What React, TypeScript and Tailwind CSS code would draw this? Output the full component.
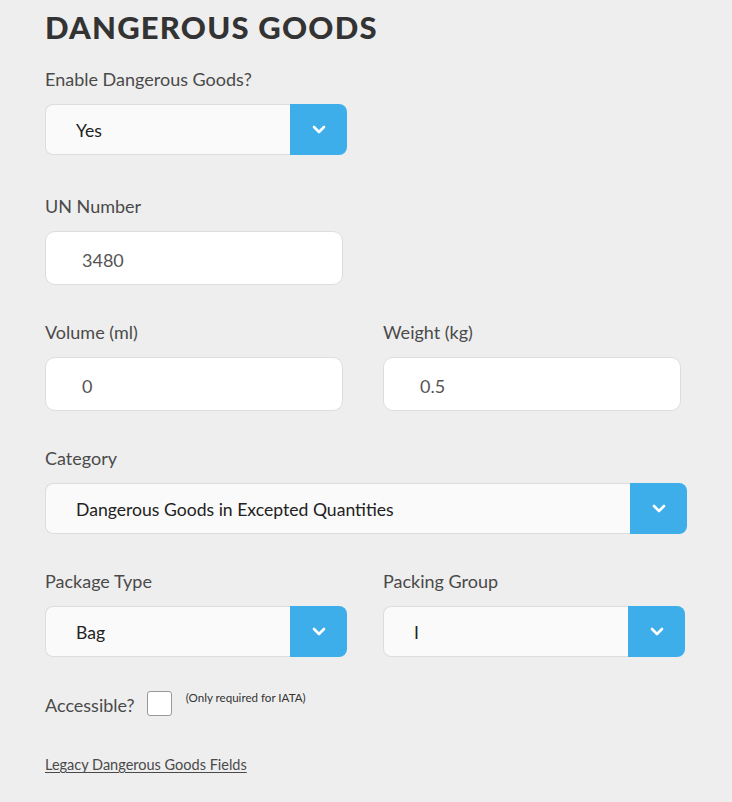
import React from "react";

const font = { fontFamily: "Lato, 'Noto Sans', 'Liberation Sans', sans-serif" };

function Chevron() {
  return (
    <svg width="14" height="9" viewBox="0 0 14 9" fill="none">
      <polyline points="2,2 7,7 12,2" stroke="white" strokeWidth="2.6" strokeLinecap="round" strokeLinejoin="round" />
    </svg>
  );
}

function Label({ children }: { children: React.ReactNode }) {
  return <div className="text-[18px] leading-[24px] text-[#4a4a4a] mb-[13px]">{children}</div>;
}

function Select({ value, width }: { value: string; width: string }) {
  return (
    <div className={`flex h-[51px] ${width}`}>
      <div className="flex-1 flex items-center pl-[30px] pt-[4px] bg-[#fafafa] border border-[#dddddd] border-r-0 rounded-l-[8px] text-[17.6px] text-[#222222]">
        {value}
      </div>
      <div className="w-[57px] flex items-center justify-center bg-[#3daeea] rounded-r-[8px]">
        <Chevron />
      </div>
    </div>
  );
}

function Input({ value }: { value: string }) {
  return (
    <div className="h-[54px] w-[298px] flex items-center pl-[36px] pt-[4px] bg-white border border-[#dddddd] rounded-[10px] text-[18px] text-[#555555]">
      {value}
    </div>
  );
}

export default function App() {
  return (
    <div className="min-h-screen bg-[#eeeeee] pl-[45px] pt-[10px] pb-[30px]" style={font}>
      {/* Heading */}
      <h1 className="text-[31px] leading-[34px] font-black text-[#333333] tracking-[1.2px]">DANGEROUS GOODS</h1>

      <div className="mt-[23px]">
        <Label>Enable Dangerous Goods?</Label>
        <Select value="Yes" width="w-[302px]" />
      </div>

      <div className="mt-[39px]">
        <Label>UN Number</Label>
        <Input value="3480" />
      </div>

      <div className="mt-[35px] flex gap-[40px]">
        <div>
          <Label>Volume (ml)</Label>
          <Input value="0" />
        </div>
        <div>
          <Label>Weight (kg)</Label>
          <Input value="0.5" />
        </div>
      </div>

      <div className="mt-[35px]">
        <Label>Category</Label>
        <Select value="Dangerous Goods in Excepted Quantities" width="w-[642px]" />
      </div>

      <div className="mt-[35px] flex gap-[36px]">
        <div>
          <Label>Package Type</Label>
          <Select value="Bag" width="w-[302px]" />
        </div>
        <div>
          <Label>Packing Group</Label>
          <Select value="I" width="w-[302px]" />
        </div>
      </div>

      {/* Accessible */}
      <div className="mt-[34px] flex items-start">
        <span className="text-[18px] leading-[24px] text-[#4a4a4a] mt-[2px]">Accessible?</span>
        <div className="ml-[12px] w-[25px] h-[25px] bg-white border border-[#999999] rounded-[3px]"></div>
        <span className="ml-[14px] text-[11.6px] leading-[14px] text-[#333333]">(Only required for IATA)</span>
      </div>

      <div className="mt-[35px]">
        <a href="#" className="text-[14.5px] text-[#4a4a4a] underline underline-offset-2">Legacy Dangerous Goods Fields</a>
      </div>
    </div>
  );
}
